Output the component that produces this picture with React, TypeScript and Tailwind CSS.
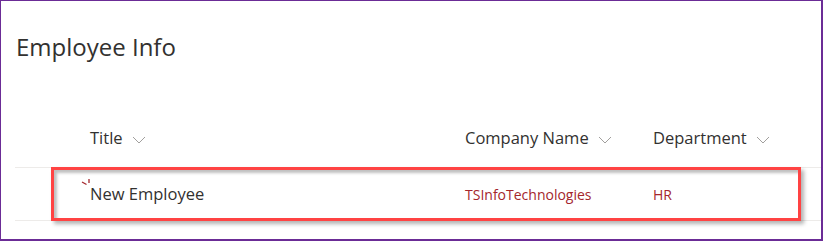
import React from "react";

const font = { fontFamily: '"Open Sans", "Noto Sans", Arial, sans-serif' };

function Chevron() {
  return (
    <svg width="14" height="8" viewBox="0 0 14 8" className="ml-[9px] mt-[2px]">
      <path d="M1 1 L7 7 L13 1" fill="none" stroke="#a19f9d" strokeWidth="1" />
    </svg>
  );
}

function NewIcon() {
  return (
    <svg width="10" height="8" viewBox="0 0 10 8" className="absolute left-[-9px] top-[-3px]">
      <path d="M1 3 L5.5 5.5" stroke="#a4262c" strokeWidth="1.3" />
      <path d="M8 0 L8 4" stroke="#a4262c" strokeWidth="1.3" />
    </svg>
  );
}

export default function App() {
  return (
    <div
      className="relative w-[823px] h-[241px] bg-white border border-r-2 border-b-2 border-[#6b2c96] text-[#323130]"
      style={font}
    >
      {/* Title */}
      <div className="h-[109px] pl-[15px] pt-[30px]">
        <h1 className="text-[24px] leading-[32px] font-normal">Employee Info</h1>
      </div>

      {/* Table */}
      <div className="ml-[14px]">
        {/* Header */}
        <div className="flex h-[57px] items-center text-[16.5px] font-medium text-[#323130]">
          <div className="w-[75px]" />
          <div className="w-[375px] flex items-center">
            <span>Title</span>
            <Chevron />
          </div>
          <div className="w-[188px] flex items-center">
            <span>Company Name</span>
            <Chevron />
          </div>
          <div className="flex items-center">
            <span>Department</span>
            <Chevron />
          </div>
        </div>

        {/* Row */}
        <div className="flex h-[54px] items-center border-t border-b border-[#edebe9]">
          <div className="w-[75px]" />
          <div className="w-[375px] text-[16.5px] relative">
            <span className="relative">
              <NewIcon />
              New Employee
            </span>
          </div>
          <div className="w-[188px] text-[14px] text-[#a4262c]">TSInfoTechnologies</div>
          <div className="text-[14px] text-[#a4262c]">HR</div>
        </div>
      </div>

      {/* Highlight box */}
      <div className="absolute left-[50px] top-[166px] w-[750px] h-[54px] border-[3px] border-[#ff4343] shadow-[3px_3px_4px_rgba(0,0,0,0.3),inset_3px_3px_3px_rgba(0,0,0,0.25)]" />
    </div>
  );
}
